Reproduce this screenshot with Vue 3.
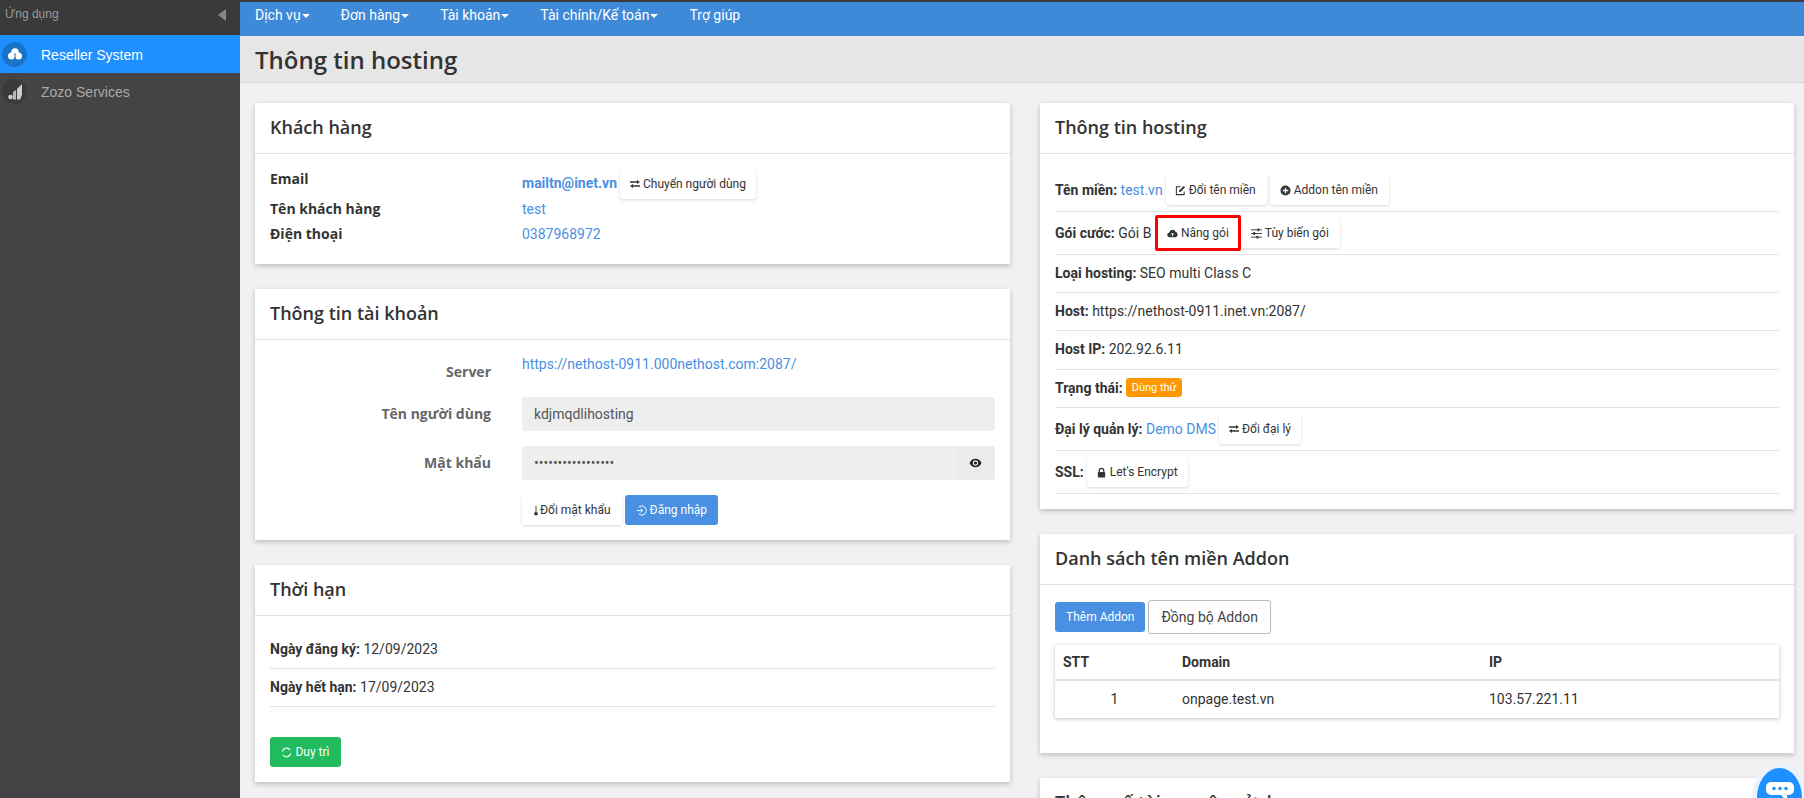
<script setup>
const nav = ['Dịch vụ', 'Đơn hàng', 'Tài khoản', 'Tài chính/Kế toán']
const customer = [
  { label: 'Tên khách hàng', value: 'test' },
  { label: 'Điện thoại', value: '0387968972' }
]
</script>

<template>
  <div class="app">
    <aside class="side">
      <div class="side-head">
        <span>Ứng dụng</span>
        <span class="collapse"></span>
      </div>
      <div class="side-item active">
        <span class="ico ico-a">
          <svg width="14" height="12" viewBox="0 0 14 12"><circle cx="3.500" cy="8" r="3.500" fill="#fff"/><circle cx="10.500" cy="8" r="3.500" fill="#fff"/><circle cx="7" cy="4" r="3.800" fill="#fff"/><path d="M7 5v7" stroke="#1e6fc0" stroke-width="1"/></svg>
        </span>
        <span class="side-text">Reseller System</span>
      </div>
      <div class="side-item">
        <span class="ico ico-b">
          <svg width="14" height="16" viewBox="0 0 14 16"><circle cx="2.500" cy="13" r="2.300" fill="#ccc"/><path d="M5 8l3-2v9.500H5z" fill="#bbb"/><path d="M9 5l5-5v11l-2 4.500H9z" fill="#ccc"/></svg>
        </span>
        <span class="side-text">Zozo Services</span>
      </div>
    </aside>

    <div class="main">
      <nav class="topnav">
        <span v-for="n in nav" :key="n" class="nav-item">{{ n }}<i class="caret"></i></span>
        <span class="nav-item">Trợ giúp</span>
      </nav>
      <header class="page-head"><h1>Thông tin hosting</h1></header>

      <div class="content">
        <div class="col">
          <section class="card">
            <h3 class="card-title">Khách hàng</h3>
            <div class="body body-customer">
              <div class="c-row first">
                <b class="c-label email-label">Email</b>
                <span class="c-val"><a class="link strong">mailtn@inet.vn</a>
                  <button class="btn btn-white mini-gap">
                    <svg class="bi swap" viewBox="0 0 10 8"><path d="M0 1.200h7V0l3 2-3 2V2.800H0zM10 5.200H3V4L0 6l3 2V6.800h7z" fill="#333"/></svg>Chuyển người dùng
                  </button>
                </span>
              </div>
              <div v-for="r in customer" :key="r.label" class="c-row">
                <b class="c-label">{{ r.label }}</b>
                <a class="link c-val">{{ r.value }}</a>
              </div>
            </div>
          </section>

          <section class="card">
            <h3 class="card-title">Thông tin tài khoản</h3>
            <div class="body body-account">
              <div class="f-row server">
                <label>Server</label>
                <a class="link">https://nethost-0911.000nethost.com:2087/</a>
              </div>
              <div class="f-row">
                <label>Tên người dùng</label>
                <div class="input">kdjmqdlihosting</div>
              </div>
              <div class="f-row">
                <label>Mật khẩu</label>
                <div class="input pw">
                  <span class="dots">•••••••••••••••••</span>
                  <span class="eye">
                    <svg width="13" height="10" viewBox="0 0 13 10"><path d="M0.500 5C2 2 4 .8 6.500 .8S11 2 12.500 5C11 8 9 9.200 6.500 9.200S2 8 .5 5z" fill="#222"/><circle cx="6.500" cy="5" r="2.700" fill="#eee"/><circle cx="6.500" cy="5" r="1.600" fill="#222"/></svg>
                  </span>
                </div>
              </div>
              <div class="f-row actions">
                <label></label>
                <div class="btns">
                  <button class="btn btn-white">
                    <svg class="bi thin" viewBox="0 0 6 12"><path d="M2.500 1h1v6.500a2 2 0 1 1-1 0z" fill="#333"/></svg>Đổi mật khẩu
                  </button>
                  <button class="btn btn-blue">
                    <svg class="bi" viewBox="0 0 12 12"><path d="M3 2.200A5 5 0 1 1 3 9.800M1 6h6M5 3.800L7.300 6 5 8.200" stroke="#fff" fill="none"/></svg>Đăng nhập
                  </button>
                </div>
              </div>
            </div>
          </section>

          <section class="card">
            <h3 class="card-title">Thời hạn</h3>
            <div class="body body-term">
              <div class="line"><b>Ngày đăng ký:</b> 12/09/2023</div>
              <div class="line"><b>Ngày hết hạn:</b> 17/09/2023</div>
              <button class="btn btn-green">
                <svg class="bi" viewBox="0 0 12 12"><path d="M1.500 5A4.600 4.600 0 0 1 10 3.500M10.500 7A4.600 4.600 0 0 1 2 8.500" stroke="#fff" stroke-width="1.200" fill="none"/></svg>Duy trì
              </button>
            </div>
          </section>
        </div>

        <div class="col">
          <section class="card">
            <h3 class="card-title">Thông tin hosting</h3>
            <div class="body body-host">
              <div class="h-row tall">
                <b>Tên miền:</b>&nbsp;<a class="link">test.vn</a>
                <button class="btn btn-white gap-l edit">
                  <svg class="bi" viewBox="0 0 12 12"><path d="M10 7v3.500H1.500V2H6" stroke="#333" stroke-width="1.100" fill="none"/><path d="M4.500 6l5-5 1.500 1.500-5 5H4.500z" fill="#333"/></svg>Đổi tên miền
                </button>
                <button class="btn btn-white roomy">
                  <svg class="bi" viewBox="0 0 12 12"><circle cx="6" cy="6" r="5.500" fill="#333"/><path d="M6 3v6M3 6h6" stroke="#fff" stroke-width="1.400"/></svg>Addon tên miền
                </button>
              </div>
              <div class="h-row tall">
                <b>Gói cước:</b>&nbsp;Gói B
                <span class="mark">
                  <button class="btn btn-white">
                    <svg class="bi" viewBox="0 0 12 10"><path d="M3 9a2.500 2.500 0 0 1-.500-5A3.500 3.500 0 0 1 9.300 3.200 3 3 0 0 1 9.500 9z" fill="#333"/><path d="M6 8V5M4.500 6L6 4.500 7.500 6" stroke="#fff" fill="none"/></svg>Nâng gói
                  </button>
                </span>
                <button class="btn btn-white roomy">
                  <svg class="bi" viewBox="0 0 12 12"><path d="M0 2h12M0 6h12M0 10h12" stroke="#333"/><rect x="7" y="0.500" width="2" height="3" fill="#333"/><rect x="2.500" y="4.500" width="2" height="3" fill="#333"/><rect x="6" y="8.500" width="2" height="3" fill="#333"/></svg>Tùy biến gói
                </button>
              </div>
              <div class="h-row plain"><b>Loại hosting:</b>&nbsp;SEO multi Class C</div>
              <div class="h-row plain"><b>Host:</b>&nbsp;https://nethost-0911.inet.vn:2087/</div>
              <div class="h-row plain r39"><b>Host IP:</b>&nbsp;202.92.6.11</div>
              <div class="h-row plain"><b>Trạng thái:</b><span class="badge">Dùng thử</span></div>
              <div class="h-row tall">
                <b>Đại lý quản lý:</b>&nbsp;<a class="link">Demo DMS</a>
                <button class="btn btn-white gap-l">
                  <svg class="bi swap" viewBox="0 0 10 8"><path d="M0 1.200h7V0l3 2-3 2V2.800H0zM10 5.200H3V4L0 6l3 2V6.800h7z" fill="#333"/></svg>Đổi đại lý
                </button>
              </div>
              <div class="h-row tall">
                <b>SSL:</b>
                <button class="btn btn-white gap-ssl">
                  <svg class="bi" viewBox="0 0 12 12"><path d="M3.500 5.500V4a2.500 2.500 0 0 1 5 0v1.500" stroke="#333" stroke-width="1.300" fill="none"/><rect x="2" y="5.500" width="8" height="6" rx="1" fill="#333"/></svg>Let's Encrypt
                </button>
              </div>
            </div>
          </section>

          <section class="card">
            <h3 class="card-title">Danh sách tên miền Addon</h3>
            <div class="body body-addon">
              <div class="addon-btns">
                <button class="btn btn-blue">Thêm Addon</button>
                <button class="btn btn-outline">Đồng bộ Addon</button>
              </div>
              <table class="tbl">
                <thead><tr><th>STT</th><th>Domain</th><th>IP</th></tr></thead>
                <tbody><tr><td class="num">1</td><td>onpage.test.vn</td><td>103.57.221.11</td></tr></tbody>
              </table>
            </div>
          </section>

          <section class="card">
            <h3 class="card-title">Thông số tài nguyên sử dụng</h3>
          </section>
        </div>
      </div>
    </div>

    <div class="chat">
      <svg width="28" height="19" viewBox="0 0 28 19"><path d="M5 0h18a5 5 0 0 1 5 5v3a5 5 0 0 1-5 5h-2v6l-6-6H5a5 5 0 0 1-5-5V5a5 5 0 0 1 5-5z" fill="#fff"/><circle cx="8" cy="6.500" r="1.700" fill="#1e90ff"/><circle cx="14" cy="6.500" r="1.700" fill="#1e90ff"/><circle cx="20" cy="6.500" r="1.700" fill="#1e90ff"/></svg>
    </div>
  </div>
</template>

<style>
html, body { margin: 0; height: 798px; overflow: hidden; background: #f1f1f1; }
</style>

<style scoped>
.app { display: flex; width: 1804px; height: 798px; overflow: hidden; position: relative; font-family: Roboto, "Noto Sans", sans-serif; font-size: 14px; color: #333; }
.side { width: 240px; flex: none; background: #444; font-family: "Liberation Sans", Arial, sans-serif; }
.side-head { height: 35px; background: #3a3a3a; display: flex; align-items: flex-start; justify-content: space-between; padding: 7px 14px 0 5px; box-sizing: border-box; color: #999; font-size: 12px; }
.collapse { width: 0; height: 0; margin-top: 2px; border-top: 6.500px solid transparent; border-bottom: 6.500px solid transparent; border-right: 8px solid #888; }
.side-item { height: 37px; display: flex; align-items: center; gap: 14px; padding-left: 2px; color: #aaa; font-size: 14px; }
.side-item.active { height: 38px; background: #1e90ff; color: #fff; }
.side-text { padding-top: 1px; }
.ico { width: 25px; height: 25px; border-radius: 50%; display: flex; align-items: center; justify-content: center; flex: none; }
.ico-a { background: #1873c9; }
.ico-b { background: #3a3a3a; }
.main { flex: 1; min-width: 0; display: flex; flex-direction: column; }
.topnav { height: 36px; border-top: 2px solid #3a3a3a; background: #3f89d9; display: flex; align-items: center; padding: 0 0 8px 15px; color: #fff; font-size: 14px; flex: none; box-sizing: border-box; }
.nav-item { margin-right: 31px; white-space: nowrap; }
.caret { display: inline-block; margin-left: 1px; vertical-align: middle; border-top: 4px solid #fff; border-left: 4px solid transparent; border-right: 4px solid transparent; }
.page-head { height: 47px; flex: none; box-sizing: border-box; background: #e6e6e6; border-bottom: 1px solid #d9d9d9; padding-left: 15px; display: flex; align-items: center; }
.page-head h1 { margin: 0; font: 600 24px "Open Sans", sans-serif; color: #333; }
.content { display: flex; gap: 30px; padding: 20px 10px 0 15px; align-items: flex-start; }
.col { width: 755px; flex: none; }
.col + .col { width: 754px; }
.card { background: #fff; box-shadow: 0 2px 5px rgba(0,0,0,.22); margin-bottom: 25px; }
.card-title { margin: 0; height: 51px; box-sizing: border-box; padding: 0 15px; font: 600 18px/48px "Open Sans", sans-serif; color: #333; border-bottom: 1px solid #e3e3e3; }
.body { padding: 0 15px; }
.link { color: #4a90e2; text-decoration: none; }
.strong { font-weight: 700; margin-bottom: 2px; }
.btn { font: 12px Roboto, sans-serif; height: 30px; padding: 0 10px; border: 0; border-radius: 3px; cursor: pointer; display: inline-flex; align-items: center; white-space: nowrap; box-sizing: border-box; color: #333; }
.bi { width: 11px; height: 11px; margin-right: 3px; flex: none; }
.bi.thin { width: 6px; margin-right: 1px; }
.bi.swap { width: 10px; height: 8px; }
.btn-white { background: #fff; box-shadow: 0 1px 3px rgba(0,0,0,.16); }
.btn-blue { background: #4a90e2; color: #fff; }
.btn-green { background: #21bc5e; color: #fff; }
.btn-outline { background: #fff; border: 1px solid #bbb; height: 34px; font-size: 14px; padding: 0 12px; color: #444; }
.roomy { padding: 0 11px 0 10px; }
.edit { padding: 0 11px 0 9px; }

.body-customer { padding-top: 15px; height: 95px; }
.c-row { display: flex; height: 25px; align-items: center; }
.c-row.first { height: 27px; align-items: flex-start; }
.c-label { width: 252px; flex: none; font-family: "Open Sans", sans-serif; font-weight: 700; font-size: 14px; color: #333; }
.email-label { margin-top: 0; }
.c-val { display: flex; align-items: center; }
.mini-gap { margin-left: 3px; }

.body-account { padding-top: 10px; padding-bottom: 15px; }
.f-row { display: flex; align-items: center; height: 34px; margin-bottom: 15px; }
.f-row label { width: 221px; flex: none; text-align: right; margin: 0 31px 2px 0; font: 700 14px "Open Sans", sans-serif; color: #666; }
.f-row.server { align-items: flex-start; height: 32px; margin-bottom: 15px; }
.f-row.server label { margin-top: 12px; }
.f-row.server .link { margin-top: 6px; }
.input { flex: 1; height: 34px; background: #eee; border-radius: 3px; padding-left: 12px; display: flex; align-items: center; color: #555; box-sizing: border-box; }
.input:not(.pw) { padding-bottom: 1px; }
.input.pw { justify-content: space-between; padding-right: 0; }
.dots { font-size: 14px; color: #555; }
.eye { width: 39px; height: 34px; display: flex; align-items: center; justify-content: center; background: #ececec; border-radius: 0 3px 3px 0; }
.actions { height: 30px; margin-bottom: 0; }
.btns { display: flex; gap: 3px; }
.btns .btn { padding: 0 11px; }

.body-term { padding-top: 15px; padding-bottom: 15px; }
.line { height: 38px; padding-bottom: 2px; display: flex; align-items: center; border-bottom: 1px solid #e3e3e3; box-sizing: border-box; color: #333; white-space: pre; }
.line b { font-weight: 700; }
.line + .line { margin-bottom: 30px; }
.btn-green { width: 71px; justify-content: center; padding: 0; display: flex; }

.body-host { padding-top: 15px; padding-bottom: 15px; }
.h-row { height: 38px; display: flex; align-items: center; border-bottom: 1px solid #e3e3e3; box-sizing: border-box; white-space: pre; color: #333; }
.h-row.plain { padding-bottom: 2px; }
.h-row.tall { height: 43px; }
.h-row.r39 { height: 39px; }
.h-row b { font-weight: 700; }
.gap-l { margin-left: 3px; margin-right: 3px; }
.gap-ssl { margin-left: 3px; padding: 0 10px 0 9px; }
.mark { border: 3px solid #f00; border-radius: 2px; height: 36px; box-sizing: border-box; display: inline-flex; align-items: center; margin-left: 0; }
.mark .btn { box-shadow: none; height: 29px; padding: 0 9px; }
.badge { margin-left: 3px; height: 19px; padding: 0 6px; border-radius: 3px; background: #ff9800; color: #fff; font-size: 11px; display: inline-flex; align-items: center; }

.body-addon { padding-top: 15px; padding-bottom: 35px; }
.addon-btns { display: flex; align-items: center; gap: 3px; height: 34px; margin-bottom: 11px; }
.addon-btns .btn-blue { padding: 0 11px; }
.tbl { width: 100%; border-collapse: collapse; box-shadow: 0 1px 4px rgba(0,0,0,.25); table-layout: fixed; }
.tbl th, .tbl td { padding: 0 8px; text-align: left; box-sizing: border-box; }
.tbl th { height: 35px; font-weight: 700; border-bottom: 2px solid #e3e3e3; }
.tbl td { height: 38px; padding-bottom: 1px; }
.tbl th:nth-child(1) { width: 119px; }
.tbl th:nth-child(2) { width: 307px; }
.tbl td.num { text-align: center; }

.chat { position: absolute; left: 1752px; top: 763px; width: 45px; height: 45px; padding-top: 14px; border-radius: 50%; background: #1e90ff; border: 5px solid #eaf3fc; display: flex; align-items: flex-start; justify-content: center; box-sizing: content-box; }
</style>
